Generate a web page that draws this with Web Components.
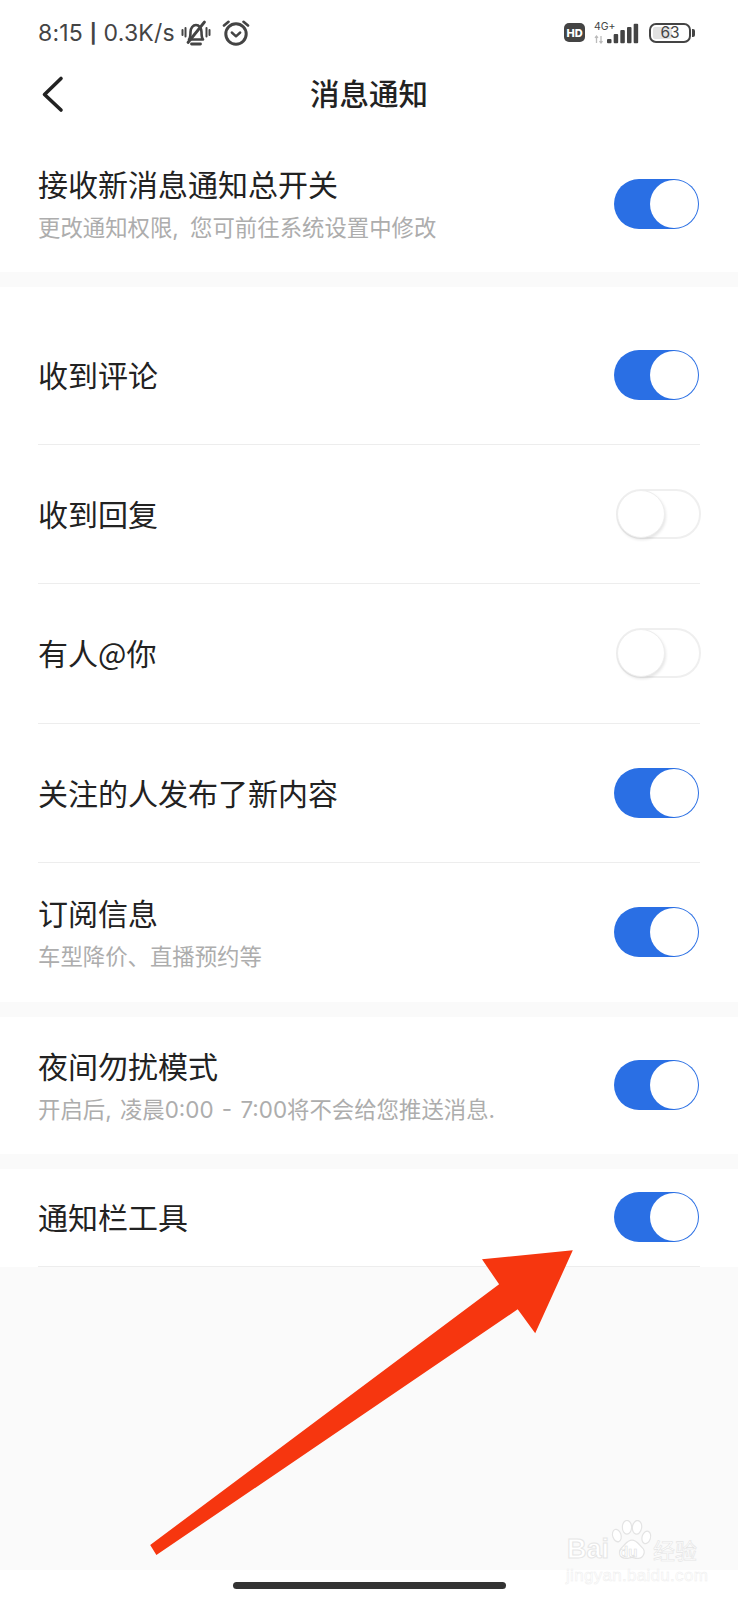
<!DOCTYPE html>
<html lang="zh">
<head>
<meta charset="utf-8">
<title>消息通知</title>
<style>
  html, body { margin: 0; padding: 0; background: #fff; }
  body {
    width: 738px;
    height: 1600px;
    overflow: hidden;
    position: relative;
    font-family: "Inter", "Noto Sans CJK SC", sans-serif;
  }
</style>
</head>
<body>

<status-bar></status-bar>
<nav-bar>消息通知</nav-bar>

<setting-group>
  <setting-row on compact>接收新消息通知总开关<span slot="sub" style="word-spacing: 5px">更改通知权限, 您可前往系统设置中修改</span></setting-row>
</setting-group>

<setting-group class="first-pad">
  <setting-row on divider>收到评论</setting-row>
  <setting-row divider>收到回复</setting-row>
  <setting-row divider>有人@你</setting-row>
  <setting-row on divider>关注的人发布了新内容</setting-row>
  <setting-row on>订阅信息<span slot="sub">车型降价、直播预约等</span></setting-row>
</setting-group>

<setting-group>
  <setting-row on compact>夜间勿扰模式<span slot="sub" style="word-spacing: 2px">开启后, 凌晨0:00 - 7:00将不会给您推送消息.</span></setting-row>
</setting-group>

<setting-group>
  <setting-row on divider short>通知栏工具</setting-row>
</setting-group>

<page-footer></page-footer>
<red-arrow></red-arrow>
<baidu-mark></baidu-mark>

<script>
  // status bar across the top
  class StatusBar extends HTMLElement {
    constructor() {
      super();
      const shadow = this.attachShadow({ mode: "open" });
      shadow.innerHTML = `
        <style>
          :host {
            display: flex;
            align-items: center;
            height: 62px;
            padding: 3px 43px 0 38px;
            box-sizing: border-box;
            color: #444;
          }
          .time { font: 400 23px "Inter", sans-serif; letter-spacing: 0.2px; white-space: nowrap; }
          .time b { font-weight: 700; font-size: 19px; vertical-align: 1px; }
          .left { display: flex; align-items: center; flex: 1; }
          .left svg { display: block; }
          .bell { margin-left: 6px; }
          .alarm { margin-left: 11px; }
          .hd {
            width: 21px; height: 19px; border-radius: 5px; background: #444; color: #fff;
            font: 800 11px "Inter", sans-serif; display: flex; align-items: center; justify-content: center;
          }
          .net { margin-left: 9px; position: relative; width: 46px; height: 22px; }
          .net span { position: absolute; left: 0; top: 0; font: 400 10.5px/9px "Inter", sans-serif; color: #444; }
          .net svg { display: block; }
          .batt {
            margin-left: 9px; width: 42px; height: 20px; border: 2.5px solid #444; border-radius: 7px;
            box-sizing: border-box; position: relative; display: flex; align-items: center; justify-content: center;
            font: 400 15.5px "Inter", sans-serif; color: #444;
          }
          .batt i { position: absolute; left: 2px; top: 2px; bottom: 2px; width: 19px; background: #e2e2e2; border-radius: 2px; }
          .batt span { position: relative; }
          .tip { width: 3px; height: 8px; background: #444; border-radius: 0 2px 2px 0; margin-left: 1px; }
        </style>
        <div class="left">
          <span class="time">8:15 <b>|</b> 0.3K/s</span>
          <svg class="bell" width="30" height="26" viewBox="0 0 30 26" fill="none" stroke="#444" stroke-linecap="round">
            <path d="M8 19.500c1.500-2 1.500-4.500 1.500-7.500 0-4 2.500-7 5.500-7s5.500 3 5.500 7c0 3 0 5.500 1.500 7.500z" stroke-linejoin="round" stroke-width="2.600"/>
            <path d="M10.500 24h9" stroke-width="2.800"/>
            <path d="M23.500 2L7 22.500" stroke-width="2.800"/>
            <path d="M1.500 10v5M4.500 8v8.500M25.500 8v8.500M28.500 10v5" stroke-width="2"/>
          </svg>
          <svg class="alarm" width="28" height="26" viewBox="0 0 28 26" fill="none" stroke="#444" stroke-linecap="round" stroke-linejoin="round">
            <circle cx="14" cy="14" r="10.200" stroke-width="3"/>
            <path d="M9.800 12.500l4.200 3.800 4.200-3.800" stroke-width="2.400"/>
            <path d="M2 5.500L6.500 1.800M26 5.500L21.500 1.800" stroke-width="2.600"/>
          </svg>
        </div>
        <div class="hd">HD</div>
        <div class="net">
          <span>4G+</span>
          <svg width="46" height="22" viewBox="0 0 46 22">
            <path d="M2.500 14v7M1 15.800l1.500-1.800 1.500 1.800M7 14v7M5.500 19.200L7 21l1.500-1.800" fill="none" stroke="#bbb" stroke-width="1.300"/>
            <rect x="13" y="17" width="4.500" height="4.300" rx="1" fill="#444"/>
            <rect x="19.670" y="12" width="4.500" height="9.300" rx="1" fill="#444"/>
            <rect x="26.330" y="8" width="4.500" height="13.300" rx="1" fill="#444"/>
            <rect x="33" y="5" width="4.500" height="16.300" rx="1" fill="#444"/>
            <rect x="39.670" y="1.700" width="4.500" height="19.600" rx="1" fill="#444"/>
          </svg>
        </div>
        <div class="batt"><i></i><span>63</span></div>
        <div class="tip"></div>
      `;
    }
  }

  // title bar with the back chevron
  class NavBar extends HTMLElement {
    constructor() {
      super();
      const shadow = this.attachShadow({ mode: "open" });
      shadow.innerHTML = `
        <style>
          :host {
            display: flex;
            align-items: center;
            justify-content: center;
            position: relative;
            height: 64px;
            padding-bottom: 4px;
            box-sizing: border-box;
            margin-bottom: 9px;
            font: 500 29.500px "Noto Sans CJK SC", sans-serif;
            color: #222;
          }
          svg { position: absolute; left: 41px; top: 13px; }
        </style>
        <svg width="24" height="38" viewBox="0 0 24 38" fill="none" stroke="#222" stroke-width="3.600" stroke-linecap="round" stroke-linejoin="round">
          <path d="M20 3.500L3.500 19.500 20 35"/>
        </svg>
        <slot></slot>
      `;
    }
  }

  class SettingGroup extends HTMLElement {
    constructor() {
      super();
      const shadow = this.attachShadow({ mode: "open" });
      shadow.innerHTML = `
        <style>
          :host { display: block; background: #fff; border-bottom: 15px solid #fafafa; }
          :host(.first-pad) { padding-top: 19px; }
          :host(:last-of-type) { border-bottom: 0; }
        </style>
        <slot></slot>
      `;
    }
  }

  // one row: label, optional sub text in slot "sub", switch on the right
  class SettingRow extends HTMLElement {
    constructor() {
      super();
      const shadow = this.attachShadow({ mode: "open" });
      shadow.innerHTML = `
        <style>
          :host {
            display: flex;
            align-items: center;
            justify-content: space-between;
            height: 139.200px;
            margin: 0 38px;
            box-sizing: border-box;
          }
          :host([divider]) { border-bottom: 1px solid #ededed; }
          :host([short]) { height: 98px; }
          :host([compact]) { height: 137px; }
          .text { padding-bottom: 2px; }
          :host([has-sub]) .text { padding-top: 4px; padding-bottom: 0; }
          .label { font: 400 30px/40px "Noto Sans CJK SC", sans-serif; color: #222; }
          ::slotted([slot="sub"]) {
            display: block;
            margin-top: 5px;
            font: 400 22.400px/40px "Inter", "Noto Sans CJK SC", sans-serif;
            color: #adadad;
          }
        </style>
        <div class="text">
          <div class="label"><slot></slot></div>
          <slot name="sub"></slot>
        </div>
        <toggle-switch></toggle-switch>
      `;
    }
    connectedCallback() {
      if (this.querySelector('[slot="sub"]')) this.setAttribute("has-sub", "");
      if (this.hasAttribute("on")) this.shadowRoot.querySelector("toggle-switch").setAttribute("on", "");
    }
  }

  class ToggleSwitch extends HTMLElement {
    constructor() {
      super();
      const shadow = this.attachShadow({ mode: "open" });
      shadow.innerHTML = `
        <style>
          :host {
            display: block;
            width: 85px;
            height: 50px;
            border-radius: 25px;
            box-sizing: border-box;
            position: relative;
            flex: none;
            background: #fff;
            border: 2px solid #efefef;
            margin-right: -1px;
          }
          :host([on]) { background: #2a6fe4; border: 0; margin-right: 1px; }
          .knob {
            position: absolute;
            left: -1px; top: -1px;
            width: 48px; height: 48px;
            border-radius: 50%;
            background: #fff;
            box-sizing: border-box;
            box-shadow: 1px 2px 3px rgba(0,0,0,.1);
            border: 1px solid #eee;
          }
          :host([on]) .knob { left: 36px; top: 1px; box-shadow: none; border: 0; }
        </style>
        <div class="knob"></div>
      `;
    }
  }

  // gray area down to the home bar
  class PageFooter extends HTMLElement {
    constructor() {
      super();
      const shadow = this.attachShadow({ mode: "open" });
      shadow.innerHTML = `
        <style>
          :host { display: flex; flex-direction: column; height: 333px; }
          .fill { height: 303px; background: #fafafa; flex: none; }
          .rest { flex: 1; display: flex; justify-content: center; padding-top: 12px; }
          .home { width: 273px; height: 7px; border-radius: 4px; background: #333; }
        </style>
        <div class="fill"></div>
        <div class="rest"><div class="home"></div></div>
      `;
    }
  }

  // annotation drawn over the screenshot
  class RedArrow extends HTMLElement {
    constructor() {
      super();
      const shadow = this.attachShadow({ mode: "open" });
      shadow.innerHTML = `
        <style>
          :host { position: absolute; left: 0; top: 0; pointer-events: none; }
          svg { display: block; }
        </style>
        <svg width="738" height="1600" viewBox="0 0 738 1600">
          <polygon fill="#f6360f" points="150.200,1545 156.400,1555 517.700,1309.300 535.200,1333.300 572.800,1250.300 482,1259.300 499.100,1284.300"/>
        </svg>
      `;
    }
  }

  // watermark, bottom right
  class BaiduMark extends HTMLElement {
    constructor() {
      super();
      const shadow = this.attachShadow({ mode: "open" });
      shadow.innerHTML = `
        <style>
          :host { position: absolute; left: 566px; top: 1518px; width: 134px; height: 68px; color: #fff; }
          .t {
            position: absolute;
            font-family: "Liberation Sans", "Noto Sans CJK SC", sans-serif;
            line-height: 1;
            color: #fff;
            -webkit-text-stroke: 1px #e6e6e6;
            white-space: nowrap;
          }
          .bai { left: 1px; top: 18px; font-size: 27px; font-weight: 700; }
          .du { left: 53px; top: 26px; font-size: 15px; font-weight: 700; -webkit-text-stroke: .6px #dedede; }
          .cn { left: 87px; top: 23px; font-size: 22px; -webkit-text-stroke: .6px #e4e4e4; }
          .url { left: 0; top: 49px; font-size: 17px; letter-spacing: .3px; -webkit-text-stroke: .5px #eee; }
          svg { position: absolute; left: 45px; top: 2px; }
        </style>
        <svg width="42" height="42" viewBox="0 0 50 46" preserveAspectRatio="none" fill="#fff" stroke="#e4e4e4" stroke-width="1.400">
          <ellipse cx="7" cy="17" rx="5" ry="7" transform="rotate(-20 7 17)"/>
          <ellipse cx="19" cy="8" rx="5.500" ry="7.500"/>
          <ellipse cx="31" cy="8" rx="5.500" ry="7.500" transform="rotate(10 31 8)"/>
          <ellipse cx="42" cy="19" rx="5" ry="7" transform="rotate(20 42 19)"/>
          <path d="M25 22c6 0 8 5 12 8 5 4 2 13-6 12-3 0-4-1-6-1s-4 1-7 1c-8 0-10-8-5-12 4-3 6-8 12-8z"/>
        </svg>
        <span class="t bai">Bai</span>
        <span class="t du">du</span>
        <span class="t cn">经验</span>
        <span class="t url">jingyan.baidu.com</span>
      `;
    }
  }

  customElements.define("toggle-switch", ToggleSwitch);
  customElements.define("status-bar", StatusBar);
  customElements.define("nav-bar", NavBar);
  customElements.define("setting-group", SettingGroup);
  customElements.define("setting-row", SettingRow);
  customElements.define("page-footer", PageFooter);
  customElements.define("red-arrow", RedArrow);
  customElements.define("baidu-mark", BaiduMark);
</script>
</body>
</html>
